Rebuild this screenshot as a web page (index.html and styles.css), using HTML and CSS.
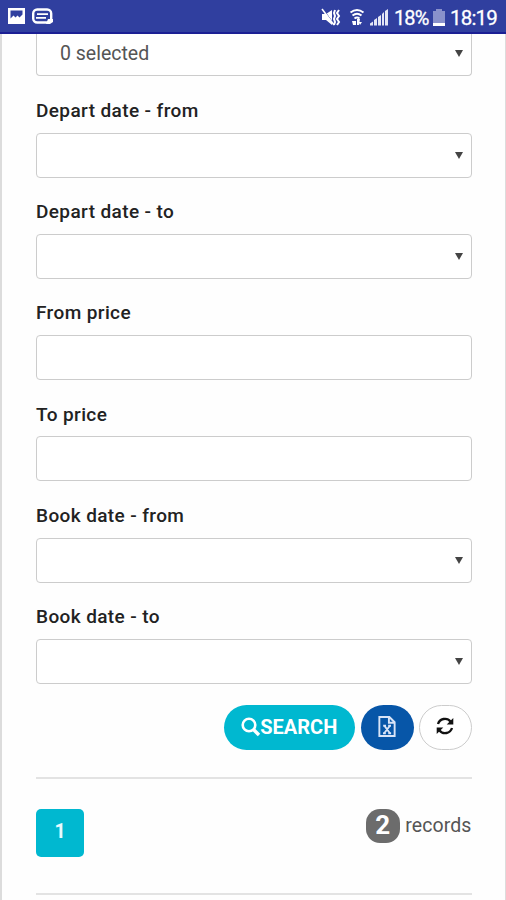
FILE: index.html
```html
<!DOCTYPE html>
<html lang="en">
<head>
<meta charset="utf-8">
<title>Booking search</title>
<link rel="stylesheet" href="styles.css">
</head>
<body>
<header class="status">
  <svg class="notifications" width="50" height="20" viewBox="0 0 50 20">
    <path fill="#fff" fill-rule="evenodd" d="M1 1h17v16H1zM3.500 3.500v8l3-3 2 2 2-2 2 2 3-3v-4z"/>
    <rect x="26.200" y="2.500" width="18" height="13" rx="4" fill="none" stroke="#fff" stroke-width="2.400"/>
    <path stroke="#fff" stroke-width="1.800" d="M30 7.200h11M29 10.800h10"/>
    <path fill="#fff" d="M41 12h5v3l-3 2h-4z"/>
  </svg>
  <div class="indicators">
    <svg width="70" height="20" viewBox="0 0 70 20">
      <path fill="#fff" d="M2 6h4l6-4v15l-6-5H2z"/>
      <path stroke="#303f9f" stroke-width="1" d="M3 1l11 15"/>
      <path stroke="#fff" stroke-width="1.600" d="M2 1l12 16"/>
      <path fill="none" stroke="#fff" stroke-width="2" d="M15 2l-1 3 1 3-1 3 1 3-1 3M19 2l-2 3 2 3-2 3 2 3-2 3"/>
      <path fill="none" stroke="#fff" stroke-width="2" d="M30.500 4.500q6.500-5 13 0M32.500 7.500q4.500-3.500 9 0M34.500 10.500q2.500-2 5 0"/>
      <path fill="#fff" d="M32 13h4v4h-3zM37 11h3l-1 6h-2zM39 14h3l-2 3z"/>
      <path fill="#e4e6f5" d="M50 17.500v-2l3-2v4zM54 17.500V12l3-2v7.500zM58 17.500V9l3-2v10.500zM62 17.500V6l2-2v13.500zM65 17.500V3l3-2v16.500z"/>
    </svg>
    <span class="percent">18%</span>
    <svg class="battery" width="12" height="18" viewBox="0 0 12 18">
      <path fill="#8991cb" d="M3 0h6v2h3v12H0V2h3z"/>
      <path fill="#fff" d="M0 14h12v3H0z"/>
    </svg>
    <span class="time">18:19</span>
  </div>
</header>
<main class="panel">
  <div class="box select cut">0 selected</div>
  <div class="field"><div class="label">Depart date - from</div><div class="box select"></div></div>
  <div class="field"><div class="label">Depart date - to</div><div class="box select"></div></div>
  <div class="field"><div class="label">From price</div><div class="box"></div></div>
  <div class="field"><div class="label">To price</div><div class="box"></div></div>
  <div class="field"><div class="label">Book date - from</div><div class="box select"></div></div>
  <div class="field"><div class="label">Book date - to</div><div class="box select"></div></div>
  <div class="actions">
    <button class="btn search"><svg width="20" height="20" viewBox="0 0 20 20"><circle cx="8" cy="8" r="6.300" fill="none" stroke="#fff" stroke-width="2.600"/><path d="M12.500 12.500l5.500 5.500" stroke="#fff" stroke-width="3.400"/></svg><span class="search-text">SEARCH</span></button>
    <button class="btn excel"><svg width="18" height="21" viewBox="0 0 18 22" fill="none" stroke="#d9e4f7" stroke-width="2"><path d="M1 1h10.500L17 6.500V21H1zM11 1v6h6"/><path d="M5 10.200h3M10.200 10.200h3M4.800 18h3M10.300 18h3M6.500 10.500l5.300 7.300M11.800 10.500L6.300 17.800"/></svg></button>
    <button class="btn refresh"><svg width="18" height="18" viewBox="0 0 18 18"><path fill="none" stroke="#111" stroke-width="2.300" d="M2 7C3.500 1.500 11 0 14.500 4.500M16 11C14.500 16.500 7 18 3.500 13.500"/><path fill="#111" d="M17.300 1v6.600h-6.600zM.7 17v-6.600h6.600z"/></svg></button>
  </div>
  <div class="results">
    <div class="page">1</div>
    <div class="records"><span class="count">2</span><span class="records-text">records</span></div>
  </div>
</main>
</body>
</html>
```
FILE: styles.css
```css
* { box-sizing: border-box; }
body {
  margin: 0;
  height: 900px;
  overflow: hidden;
  background: #fefefe;
  color: #222;
  font-family: Roboto, sans-serif;
  display: flex;
  flex-direction: column;
}
.status {
  flex: none;
  height: 34px;
  padding: 0 9px 0 7px;
  background: #303f9f;
  border-bottom: 2px solid #1b1f94;
  display: flex;
  justify-content: space-between;
  align-items: center;
  color: #fff;
}
.notifications { margin-top: 2px; }
.indicators { display: flex; align-items: center; line-height: 30px; padding-top: 3px; }
.percent {
  width: 35px;
  margin-left: 4px;
  font-size: 20px;
  letter-spacing: -0.9px;
  white-space: nowrap;
  -webkit-text-stroke: 0.3px #fff;
}
.battery { margin: 0 5px 0 4px; }
.time {
  width: 47px;
  font-size: 20.5px;
  letter-spacing: -0.8px;
  white-space: nowrap;
  -webkit-text-stroke: 0.3px #fff;
}
.panel {
  flex: 1;
  min-height: 0;
  border-left: 2px solid #dcdcdc;
  border-right: 1px solid #dcdcdc;
  padding: 0 33.5px 0 34px;
}
.field { height: 101.25px; padding-top: 22.5px; }
.label {
  height: 24px;
  margin-bottom: 9.75px;
  line-height: 24px;
  font-size: 19px;
  font-weight: 500;
  letter-spacing: 0.39px;
}
.box {
  height: 45px;
  border: 1.5px solid #ccc;
  border-radius: 4px;
  display: flex;
  align-items: center;
  background: #fff;
}
.cut {
  height: 42px;
  margin-bottom: 0.25px;
  border-top: 0;
  border-radius: 0 0 4px 4px;
  padding: 0 0 3px 23px;
  font-size: 19.5px;
  color: #555;
}
.select::after {
  content: "";
  margin: 0 8px 0 auto;
  border: 4px solid transparent;
  border-top: 7px solid #444;
  border-bottom: 0;
}
.actions { display: flex; justify-content: flex-end; padding-top: 21px; height: 93px; }
.btn {
  height: 45px;
  border: 0;
  padding: 0;
  border-radius: 23px;
  display: flex;
  align-items: center;
  justify-content: center;
  font-family: inherit;
}
.search { width: 130.5px; padding-bottom: 1px; background: #00b8d0; color: #fff; font-size: 20px; font-weight: 700; }
.excel { width: 53px; margin: 0 5px 0 6px; padding-bottom: 1px; background: #0756a8; }
.refresh { width: 53px; padding-bottom: 2px; background: #fff; border: 1px solid #ccc; }
.search-text { margin-left: -1px; }
.results {
  height: 118px;
  border-top: 2px solid #e3e3e3;
  border-bottom: 2px solid #e3e3e3;
  padding-top: 30px;
  display: flex;
  justify-content: space-between;
}
.page {
  width: 48px;
  height: 48px;
  border-radius: 5px;
  background: #00b8d0;
  color: #e8faff;
  font-size: 19.5px;
  font-weight: 700;
  line-height: 46px;
  text-align: center;
}
.records { display: flex; height: 34px; color: #555; }
.count {
  width: 34px;
  height: 34px;
  margin-right: 5.5px;
  border-radius: 14px;
  background: #6c6c6c;
  color: #fff;
  font-size: 26px;
  font-weight: 700;
  line-height: 32px;
  text-align: center;
}
.records-text { font-size: 19.5px; line-height: 33px; letter-spacing: 0.1px; }
```
